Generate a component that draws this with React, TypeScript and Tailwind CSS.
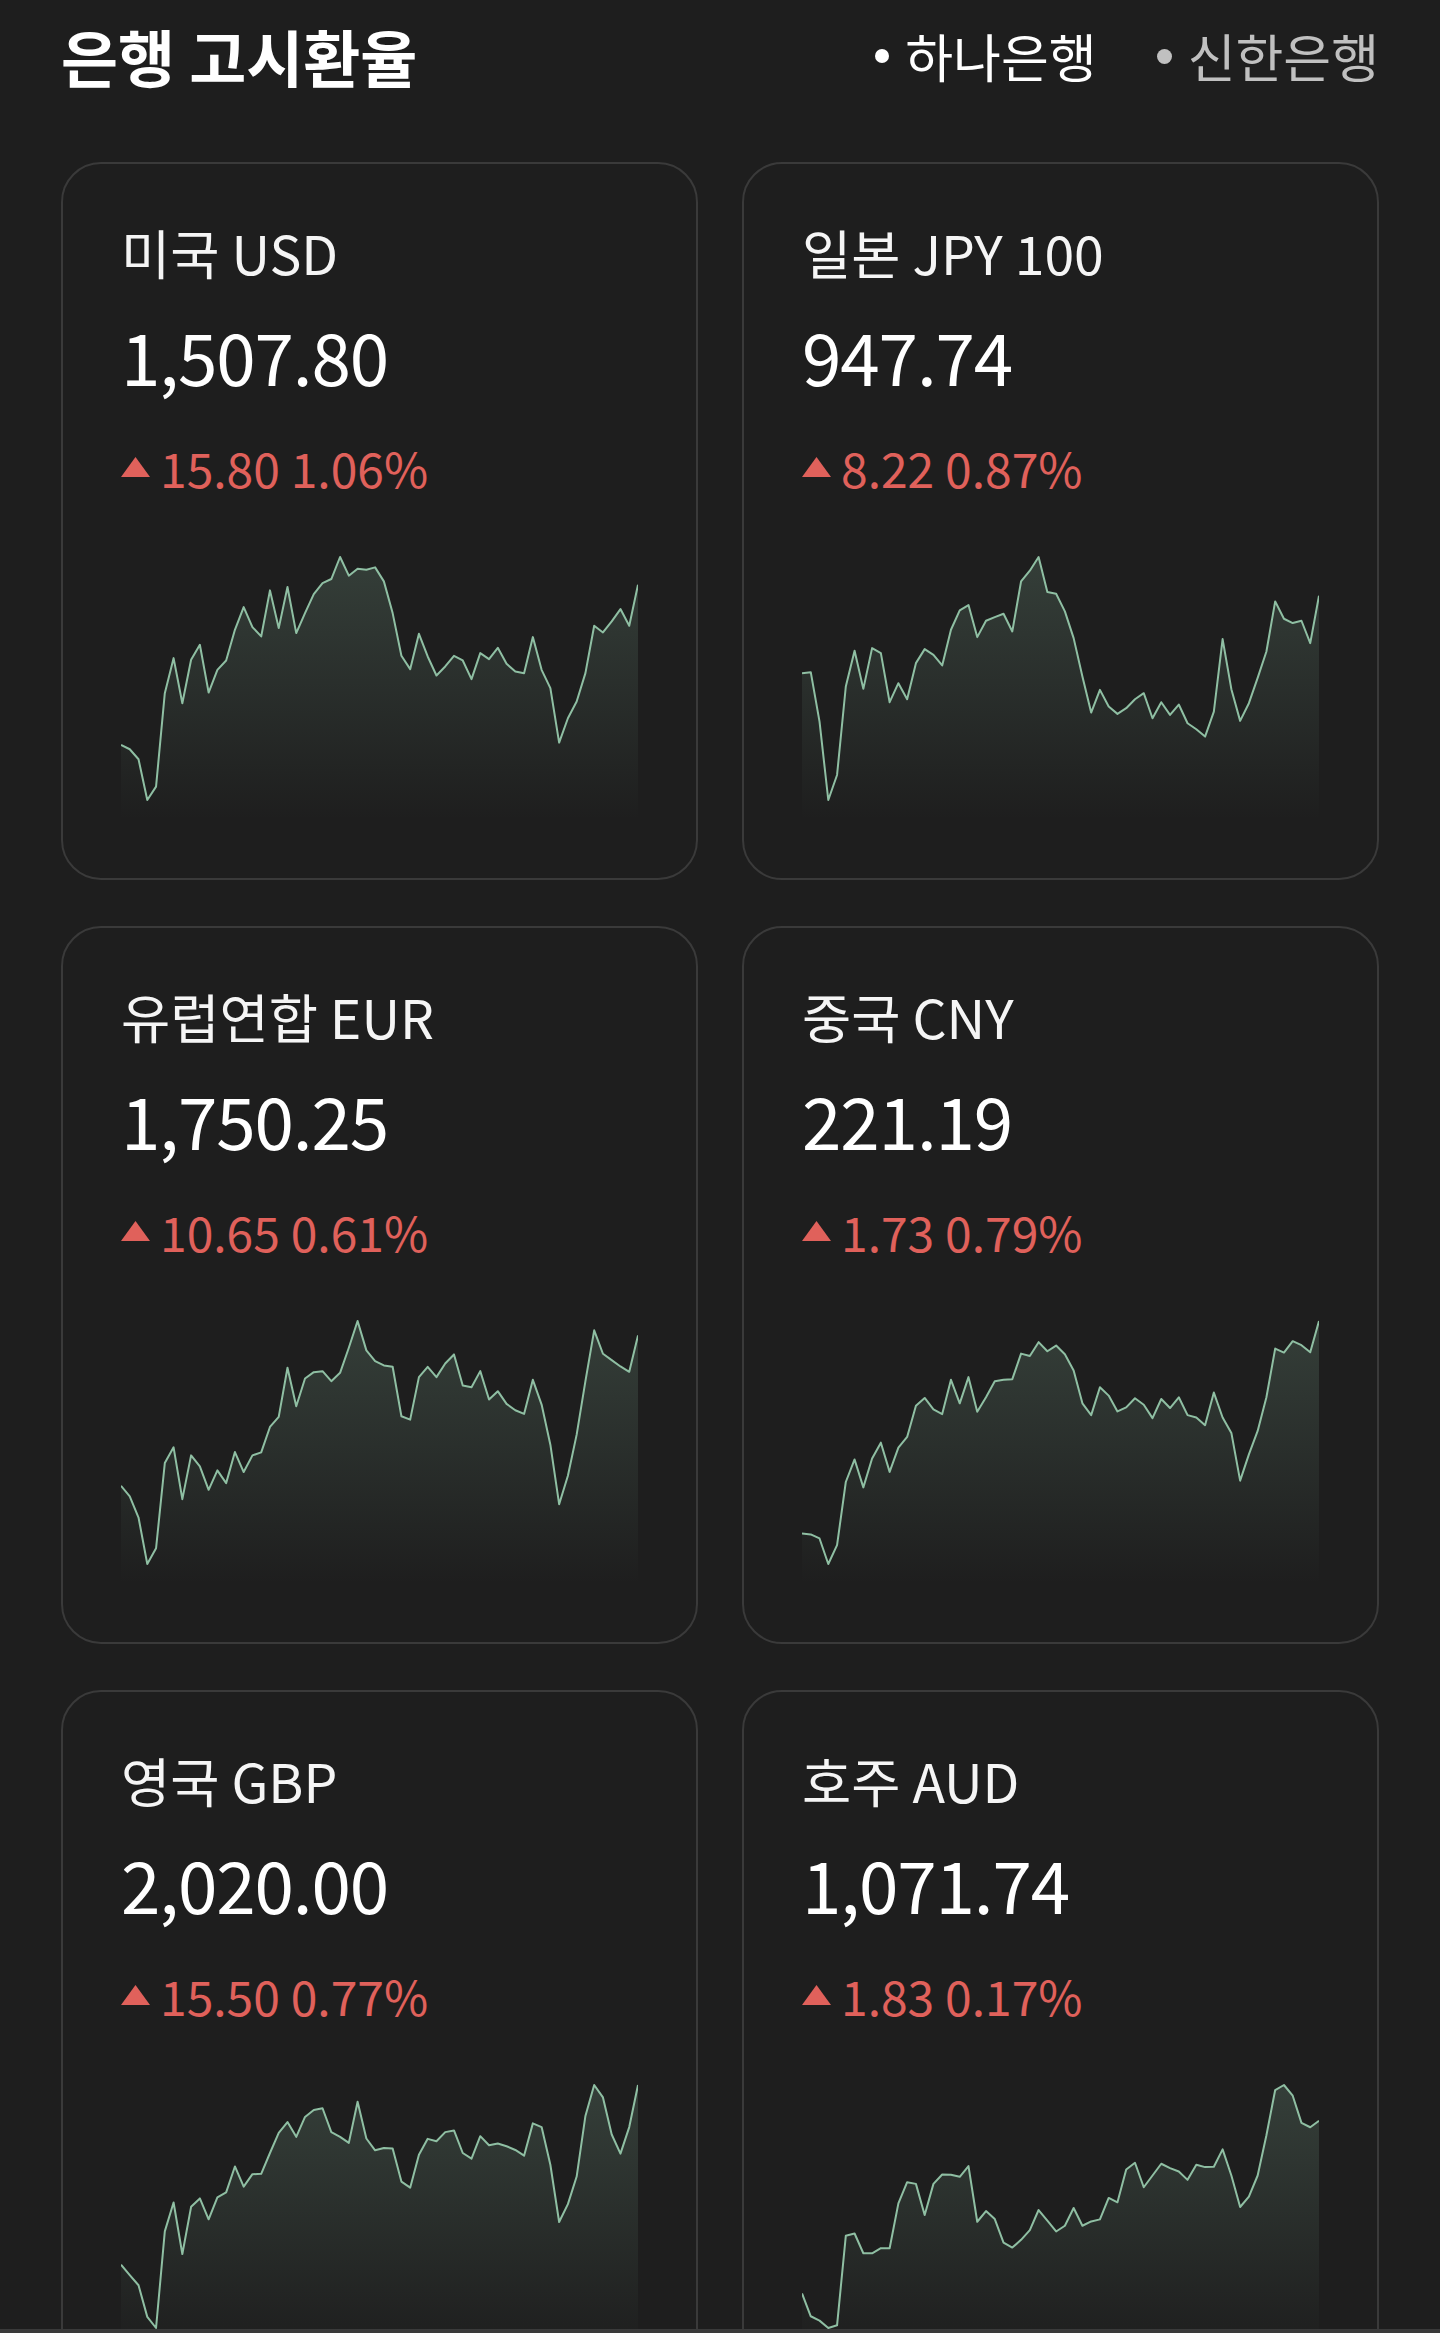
import React from "react";

type Card = {
  name: string;
  value: string;
  diff: string;
  pct: string;
  data: number[];
};

const cards: Card[] = [
  {
    name: "미국 USD",
    value: "1,507.80",
    diff: "15.80",
    pct: "1.06%",
    data: [735, 748, 778, 900, 860, 580, 475, 610, 480, 435, 578, 510, 482, 390, 322, 382, 410, 272, 385, 262, 400, 340, 283, 250, 238, 172, 228, 207, 210, 203, 245, 340, 468, 508, 402, 470, 527, 500, 468, 482, 538, 460, 478, 444, 492, 515, 520, 412, 510, 565, 728, 655, 605, 520, 378, 398, 365, 328, 378, 255],
  },
  {
    name: "일본 JPY 100",
    value: "947.74",
    diff: "8.22",
    pct: "0.87%",
    data: [400, 397, 545, 780, 705, 440, 333, 447, 325, 340, 487, 430, 478, 370, 328, 345, 377, 270, 212, 196, 292, 243, 232, 222, 275, 125, 93, 52, 157, 162, 215, 295, 410, 518, 450, 500, 522, 505, 478, 460, 535, 487, 525, 494, 550, 568, 590, 515, 298, 448, 543, 490, 414, 335, 185, 237, 250, 243, 310, 168],
  },
  {
    name: "유럽연합 EUR",
    value: "1,750.25",
    diff: "10.65",
    pct: "0.61%",
    data: [543, 575, 638, 777, 730, 475, 428, 583, 452, 485, 555, 497, 535, 442, 502, 452, 443, 367, 337, 190, 305, 222, 203, 200, 230, 205, 130, 50, 138, 170, 183, 187, 335, 345, 218, 187, 218, 177, 150, 243, 248, 200, 285, 260, 298, 317, 328, 226, 300, 420, 598, 513, 390, 230, 78, 148, 167, 186, 202, 93],
  },
  {
    name: "중국 CNY",
    value: "221.19",
    diff: "1.73",
    pct: "0.79%",
    data: [685, 688, 700, 776, 720, 532, 465, 548, 462, 415, 502, 430, 398, 305, 282, 316, 330, 228, 298, 220, 323, 280, 232, 228, 226, 150, 157, 116, 143, 126, 152, 200, 298, 333, 250, 275, 322, 310, 283, 302, 342, 285, 312, 280, 333, 340, 363, 266, 340, 386, 528, 450, 380, 280, 135, 147, 113, 125, 146, 53],
  },
  {
    name: "영국 GBP",
    value: "2,020.00",
    diff: "15.50",
    pct: "0.77%",
    data: [667, 698, 728, 822, 855, 568, 482, 635, 495, 470, 532, 467, 452, 375, 435, 398, 397, 335, 275, 243, 287, 228, 207, 202, 273, 287, 305, 183, 292, 327, 320, 322, 420, 438, 340, 293, 300, 273, 268, 335, 352, 285, 312, 307, 315, 326, 343, 247, 258, 370, 540, 487, 405, 225, 133, 170, 280, 337, 258, 133],
  },
  {
    name: "호주 AUD",
    value: "1,071.74",
    diff: "1.83",
    pct: "0.17%",
    data: [752, 820, 833, 855, 847, 580, 573, 632, 632, 617, 617, 483, 420, 425, 518, 425, 397, 398, 404, 372, 538, 506, 530, 600, 615, 592, 563, 503, 535, 567, 550, 497, 550, 537, 531, 467, 480, 382, 362, 435, 400, 365, 378, 388, 413, 368, 375, 374, 322, 400, 494, 463, 400, 280, 145, 130, 162, 243, 256, 237],
  },
];

const W = 517;
const H = 280;

function Sparkline({ data, id }: { data: number[]; id: string }) {
  const top = Math.min(...data);
  const bottom = Math.max(...data);
  const pts = data.map((v, i) => {
    const x = (i * W) / (data.length - 1);
    const y = 17 + ((v - top) / (bottom - top)) * 243;
    return [x, y];
  });
  const line = pts.map((p, i) => `${i === 0 ? "M" : "L"}${p[0].toFixed(2)},${p[1].toFixed(2)}`).join(" ");
  const area = `${line} L${W},${H} L0,${H} Z`;
  return (
    <svg viewBox={`0 0 ${W} ${H}`} preserveAspectRatio="none" className="block w-full h-[280px]">
      <defs>
        <linearGradient id={id} x1="0" y1="0" x2="0" y2="1">
          <stop offset="0%" stopColor="#8fc0a4" stopOpacity="0.2" />
          <stop offset="100%" stopColor="#8fc0a4" stopOpacity="0" />
        </linearGradient>
      </defs>
      <path d={area} fill={`url(#${id})`} />
      <path d={line} fill="none" stroke="#8fbfa3" strokeWidth="2" strokeLinejoin="round" vectorEffect="non-scaling-stroke" />
    </svg>
  );
}

function RateCard({ card, idx }: { card: Card; idx: number }) {
  return (
    <div className="rounded-[40px] border-2 border-[#3a3a3a] px-[58px] pt-[61px] pb-[58px]">
      <div className="text-[53.5px] leading-none text-[#f5f5f5] h-[53px] whitespace-nowrap">{card.name}</div>
      <div className="mt-[42px] text-[71px] leading-none tracking-[-1.1px] text-white h-[71px]">{card.value}</div>
      <div className="mt-[52px] flex items-center h-[48px] text-[48px] leading-none text-[#e0615b]">
        <svg width="29" height="20" viewBox="0 0 29 20" className="mr-[10px] shrink-0">
          <polygon points="14.5,0 29,20 0,20" fill="#e0615b" />
        </svg>
        <span className="whitespace-nowrap">
          {card.diff} {card.pct}
        </span>
      </div>
      <div className="mt-[49px]">
        <Sparkline data={card.data} id={`grad-${idx}`} />
      </div>
    </div>
  );
}

export default function App() {
  return (
    <div className="relative h-[2333px] w-full overflow-hidden bg-[#1e1e1e] font-['Noto_Sans_CJK_KR','Noto_Sans',sans-serif] text-white">
      <header className="flex h-[112px] items-center justify-between px-[61px]">
        <h1 className="text-[62px] font-bold leading-none text-white">은행 고시환율</h1>
        <div className="flex items-center gap-[60px] text-[52px] leading-none">
          <div className="flex items-center gap-[16px] text-white">
            <span className="h-[14px] w-[14px] rounded-full bg-white" />
            <span>하나은행</span>
          </div>
          <div className="flex items-center gap-[16px] text-[#c0c0c0]">
            <span className="h-[15px] w-[15px] rounded-full bg-[#c0c0c0]" />
            <span>신한은행</span>
          </div>
        </div>
      </header>
      <main className="grid grid-cols-2 gap-x-[44px] gap-y-[46px] px-[61px] pt-[50px]">
        {cards.map((c, i) => (
          <RateCard key={c.name} card={c} idx={i} />
        ))}
      </main>
      <div className="fixed bottom-0 left-0 right-0 h-[4px] bg-[#3a3a3a]" />
    </div>
  );
}
